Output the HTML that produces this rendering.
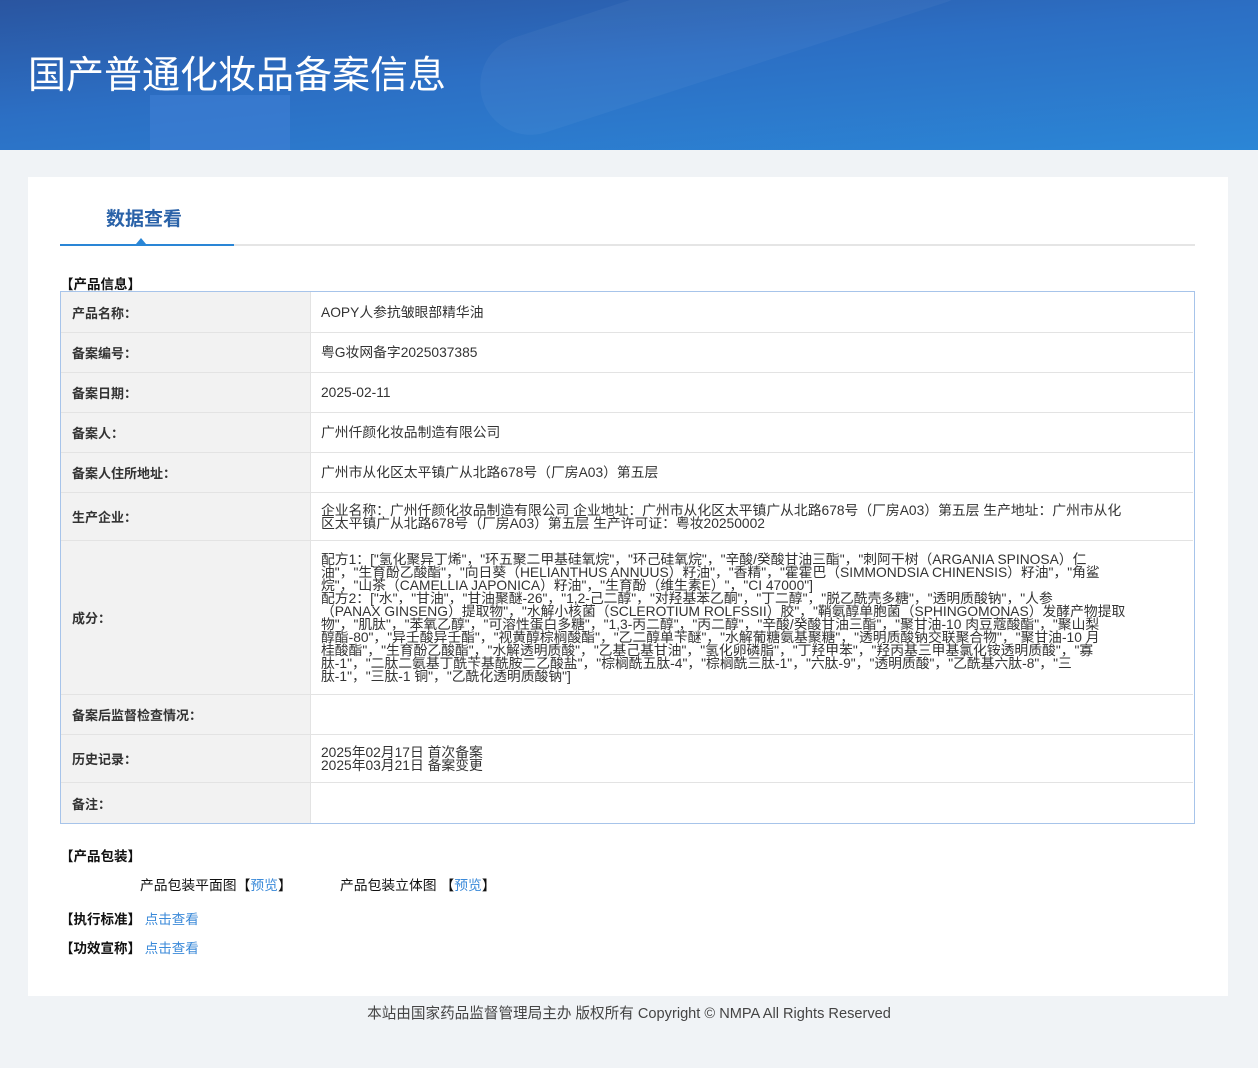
<!DOCTYPE html>
<html><head><meta charset="utf-8"><style>
*{margin:0;padding:0;box-sizing:border-box}
body{width:1258px;height:1068px;background:#f0f3f6;font-family:"Liberation Sans","Noto Sans CJK SC",sans-serif;position:relative;overflow:hidden;color:#333}
.hdr{position:absolute;left:0;top:0;width:1258px;height:150px;background:linear-gradient(175deg,#2a55a0 0%,#2c6fc4 45%,#2b86d6 100%);overflow:hidden}
.hdr .s1{position:absolute;left:150px;top:95px;width:140px;height:80px;background:#3f7fd4;opacity:.6}
.hdr .s2{position:absolute;left:470px;top:-30px;width:520px;height:100px;border-radius:60px;background:rgba(255,255,255,.04);transform:rotate(-18deg)}
.hdr h1{position:absolute;left:28px;top:54px;font-size:38px;font-weight:normal;color:#fff;line-height:44px}
.card{position:absolute;left:28px;top:177px;width:1200px;height:819px;background:#fff}
.tab{position:absolute;left:78px;top:27px;font-size:19px;font-weight:bold;color:#2a62a8}
.line{position:absolute;left:32px;top:67px;width:1135px;height:2px;background:#e5e5e5}
.line2{position:absolute;left:32px;top:67px;width:174px;height:2px;background:#2a86d6}
.tri{position:absolute;left:108px;top:61px;width:0;height:0;border-left:5px solid transparent;border-right:5px solid transparent;border-bottom:6px solid #2a86d6}
.sec{position:absolute;font-size:13.5px;font-weight:bold;color:#111}
.tbl{position:absolute;left:32px;top:114px;width:1135px;height:533px;border:1.5px solid #a7c4ea;}
.row{position:absolute;left:0;width:1132px;border-top:1px solid #e3e3e3}
.row:first-child{border-top:none}
.lab{position:absolute;left:0;top:0;bottom:0;width:250px;background:#f2f2f2;border-right:1px solid #e3e3e3;font-size:13px;font-weight:bold;color:#333;display:flex;align-items:center;padding-left:11px}
.val{position:absolute;left:260px;top:0;bottom:0;display:flex;align-items:center;font-size:13.8px;line-height:13px;color:#333;white-space:nowrap}
.t{position:absolute;font-size:13.8px;color:#111}
a{color:#3b8ad9;text-decoration:none}
.foot{position:absolute;left:0;top:1002px;width:1258px;text-align:center;font-size:14.6px;color:#444}
</style></head><body>
<div class="hdr"><div class="s1"></div><div class="s2"></div><h1>国产普通化妆品备案信息</h1></div>
<div class="card">
<div class="tab">数据查看</div>
<div class="line"></div><div class="line2"></div><div class="tri"></div>
<div class="sec" style="left:32px;top:96px">【产品信息】</div>
<div class="tbl">
<div class="row" style="top:0;height:40px"><div class="lab">产品名称：</div><div class="val">AOPY人参抗皱眼部精华油</div></div>
<div class="row" style="top:40px;height:40px"><div class="lab">备案编号：</div><div class="val">粤G妆网备字2025037385</div></div>
<div class="row" style="top:80px;height:40px"><div class="lab">备案日期：</div><div class="val">2025-02-11</div></div>
<div class="row" style="top:120px;height:40px"><div class="lab">备案人：</div><div class="val">广州仟颜化妆品制造有限公司</div></div>
<div class="row" style="top:160px;height:40px"><div class="lab">备案人住所地址：</div><div class="val">广州市从化区太平镇广从北路678号（厂房A03）第五层</div></div>
<div class="row" style="top:200px;height:48px"><div class="lab">生产企业：</div><div class="val">企业名称：广州仟颜化妆品制造有限公司 企业地址：广州市从化区太平镇广从北路678号（厂房A03）第五层 生产地址：广州市从化<br>区太平镇广从北路678号（厂房A03）第五层 生产许可证：粤妆20250002</div></div>
<div class="row" style="top:248px;height:154px"><div class="lab">成分：</div><div class="val">配方1：["氢化聚异丁烯"，"环五聚二甲基硅氧烷"，"环己硅氧烷"，"辛酸/癸酸甘油三酯"，"刺阿干树（ARGANIA SPINOSA）仁<br>油"，"生育酚乙酸酯"，"向日葵（HELIANTHUS ANNUUS）籽油"，"香精"，"霍霍巴（SIMMONDSIA CHINENSIS）籽油"，"角鲨<br>烷"，"山茶（CAMELLIA JAPONICA）籽油"，"生育酚（维生素E）"，"CI 47000"]<br>配方2：["水"，"甘油"，"甘油聚醚-26"，"1,2-己二醇"，"对羟基苯乙酮"，"丁二醇"，"脱乙酰壳多糖"，"透明质酸钠"，"人参<br>（PANAX GINSENG）提取物"，"水解小核菌（SCLEROTIUM ROLFSSII）胶"，"鞘氨醇单胞菌（SPHINGOMONAS）发酵产物提取<br>物"，"肌肽"，"苯氧乙醇"，"可溶性蛋白多糖"，"1,3-丙二醇"，"丙二醇"，"辛酸/癸酸甘油三酯"，"聚甘油-10 肉豆蔻酸酯"，"聚山梨<br>醇酯-80"，"异壬酸异壬酯"，"视黄醇棕榈酸酯"，"乙二醇单苄醚"，"水解葡糖氨基聚糖"，"透明质酸钠交联聚合物"，"聚甘油-10 月<br>桂酸酯"，"生育酚乙酸酯"，"水解透明质酸"，"乙基己基甘油"，"氢化卵磷脂"，"丁羟甲苯"，"羟丙基三甲基氯化铵透明质酸"，"寡<br>肽-1"，"二肽二氨基丁酰苄基酰胺二乙酸盐"，"棕榈酰五肽-4"，"棕榈酰三肽-1"，"六肽-9"，"透明质酸"，"乙酰基六肽-8"，"三<br>肽-1"，"三肽-1 铜"，"乙酰化透明质酸钠"]</div></div>
<div class="row" style="top:402px;height:40px"><div class="lab">备案后监督检查情况：</div><div class="val"></div></div>
<div class="row" style="top:442px;height:48px"><div class="lab">历史记录：</div><div class="val">2025年02月17日 首次备案<br>2025年03月21日 备案变更</div></div>
<div class="row" style="top:490px;height:41px"><div class="lab">备注：</div><div class="val"></div></div>
</div>
<div class="sec" style="left:32px;top:668px">【产品包装】</div>
<div class="t" style="left:112px;top:697px">产品包装平面图【<a>预览</a>】</div>
<div class="t" style="left:312px;top:697px">产品包装立体图 【<a>预览</a>】</div>
<div class="sec" style="left:32px;top:731px">【执行标准】 <a style="font-weight:normal">点击查看</a></div>
<div class="sec" style="left:32px;top:760px">【功效宣称】 <a style="font-weight:normal">点击查看</a></div>
</div>
<div class="foot">本站由国家药品监督管理局主办 版权所有 Copyright © NMPA All Rights Reserved</div>
</body></html>
